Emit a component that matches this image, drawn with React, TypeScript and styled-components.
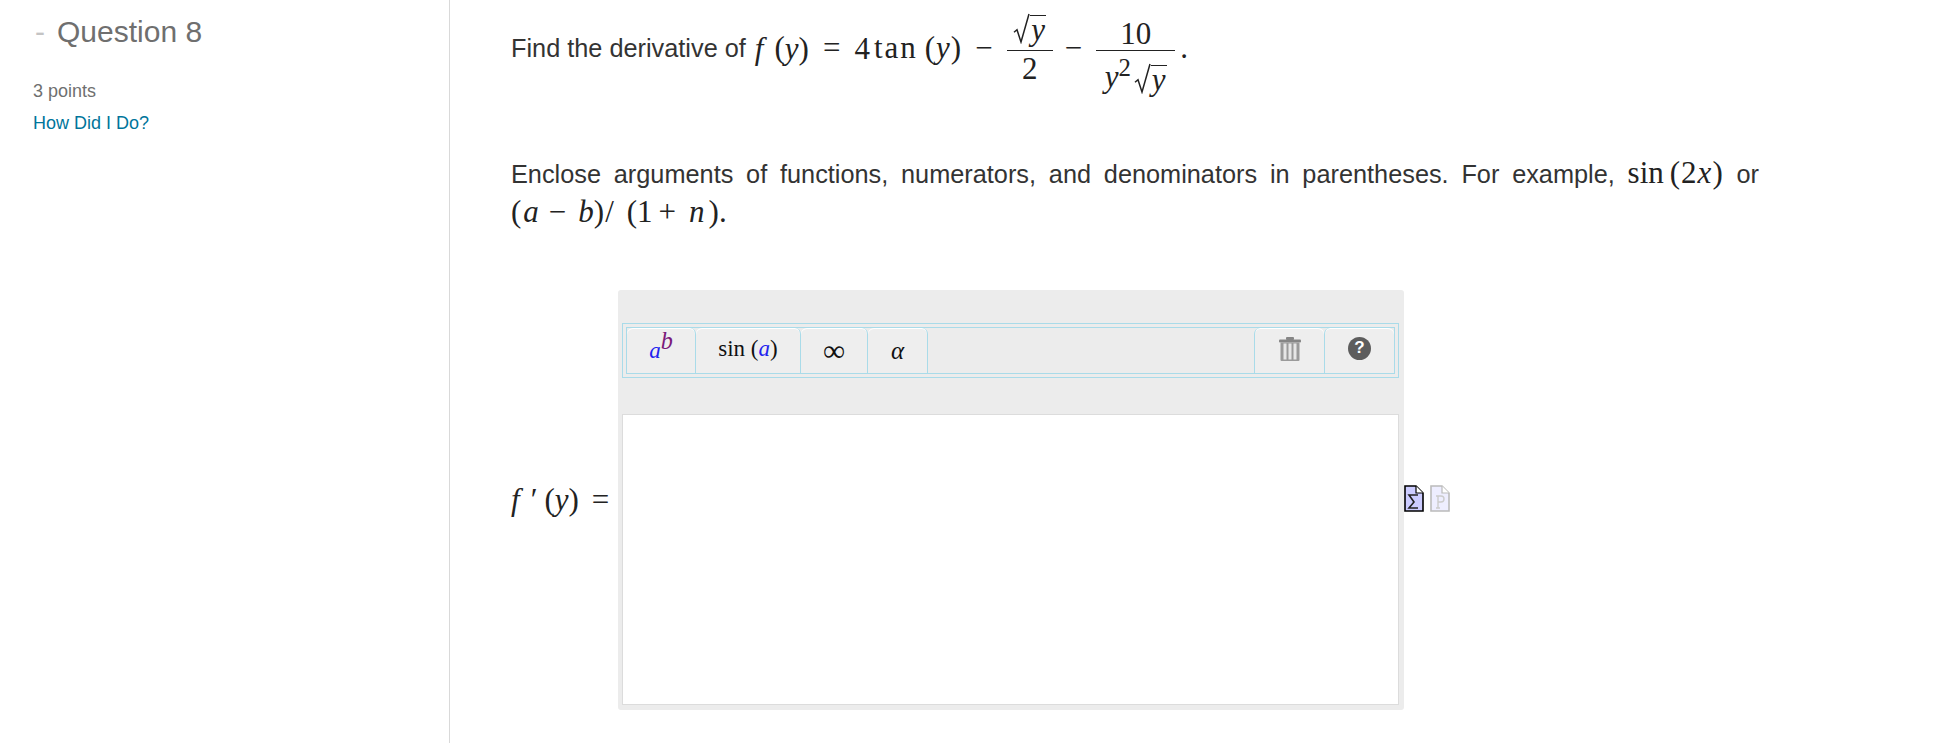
import React from "react";
import styled, { createGlobalStyle } from "styled-components";

const GlobalStyle = createGlobalStyle`
  html, body {
    margin: 0;
    padding: 0;
    background: #fff;
    font-family: "Liberation Sans", Arial, sans-serif;
  }
`;

const Page = styled.div`
  display: flex;
  height: 743px;
  overflow: hidden;
`;

const Sidebar = styled.aside`
  flex: none;
  box-sizing: border-box;
  width: 450px;
  padding: 14px 0 0 33px;
  border-right: 1px solid #d9d9d9;
  color: #6f6f6f;
`;

const QuestionTitle = styled.h2`
  display: flex;
  margin: 0;
  font-size: 30px;
  font-weight: 400;
  line-height: 36px;
`;

const Dash = styled.span`
  width: 22px;
  margin-left: 2px;
  color: #c4c4c4;
`;

const Points = styled.div`
  margin-top: 25px;
  font-size: 18px;
  line-height: 32px;
`;

const HelpLink = styled.a`
  display: block;
  color: #00759b;
  font-size: 18px;
  line-height: 32px;
  text-decoration: none;
`;

const Main = styled.main`
  width: 1248px;
  margin-left: 61px;
  color: #333;
  font-size: 25.3px;
`;

const Intro = styled.div`
  display: flex;
  align-items: center;
  height: 96px;
`;

const Instructions = styled.p`
  margin: 58px 0 0;
  line-height: 38px;
  text-align: justify;
`;

const Formula = styled.span`
  font-family: "Liberation Serif", "Times New Roman", serif;
  font-size: 31px;
  color: #222;
  white-space: nowrap;
`;

const IntroFormula = styled(Formula)`
  margin: 6px 0 0 2px;
`;

const V = styled.i<{ $color?: string }>`
  color: ${(p) => p.$color ?? "inherit"};
`;

// a symbol with the spacing TeX would put around it
const Sp = styled.span<{ $l?: number; $r?: number; $track?: number }>`
  margin-left: ${(p) => p.$l ?? 0}px;
  margin-right: ${(p) => p.$r ?? 0}px;
  letter-spacing: ${(p) => p.$track ?? 0}px;
`;

const Fraction = styled.span<{ $width: number }>`
  display: inline-flex;
  flex-direction: column;
  vertical-align: middle;
  width: ${(p) => p.$width}px;
`;

const Numerator = styled.span<{ $line: number }>`
  display: block;
  height: 40px;
  border-bottom: 1px solid #222;
  line-height: ${(p) => p.$line}px;
  text-align: center;
`;

const Denominator = styled.span<{ $line: number }>`
  display: block;
  height: 42px;
  line-height: ${(p) => p.$line}px;
  text-align: center;
`;

const Sqrt = styled.span<{ $drop: number }>`
  display: inline-flex;
  align-items: flex-end;
  vertical-align: ${(p) => p.$drop}px;
`;

const Radicand = styled.span`
  margin-top: 3px;
  padding: 0 1px;
  border-top: 1px solid #222;
  line-height: 28px;
`;

const Sup = styled.sup<{ $color?: string; $size: string; $lift: number }>`
  font-size: ${(p) => p.$size};
  line-height: 0;
  vertical-align: ${(p) => p.$lift}px;
  color: ${(p) => p.$color ?? "inherit"};
`;

const WidgetRow = styled.div`
  display: flex;
  align-items: center;
  margin-top: 58px;
`;

const AnswerLabel = styled.label`
  flex: none;
  width: 107px;
`;

const Panel = styled.div`
  flex: none;
  box-sizing: border-box;
  width: 786px;
  height: 420px;
  padding: 33px 5px 5px 4px;
  background: #ececec;
  border-radius: 3px;
`;

const Toolbar = styled.div`
  box-sizing: border-box;
  height: 55px;
  padding: 3px;
  border: 1px solid #a9dbe9;
`;

const ToolbarInner = styled.div`
  display: flex;
  justify-content: space-between;
  box-sizing: border-box;
  height: 100%;
  border: 1px solid #a9dbe9;
`;

const ToolGroup = styled.div`
  display: flex;
`;

const ToolButton = styled.button<{ $width: number; $side?: "left"; $size?: number }>`
  display: flex;
  align-items: center;
  justify-content: center;
  box-sizing: border-box;
  width: ${(p) => p.$width}px;
  padding: 0;
  background: #eeeeee;
  border: 0;
  border-${(p) => p.$side ?? "right"}: 1px solid #a9dbe9;
  border-radius: 6px 6px 0 0;
  box-shadow: inset 0 1px 0 #fff;
  font-family: "Liberation Serif", "Times New Roman", serif;
  font-size: ${(p) => p.$size ?? 23}px;
  color: #111;
`;

const Spacer = styled.div`
  flex: 1;
`;

const GlyphLift = styled.span`
  display: flex;
  margin-bottom: 4px;
`;

const HelpBadge = styled.span`
  display: flex;
  align-items: center;
  justify-content: center;
  width: 23px;
  height: 23px;
  margin-bottom: 5px;
  border-radius: 50%;
  background: #5d5d5d;
  color: #fff;
  font-family: "Liberation Sans", Arial, sans-serif;
  font-size: 17px;
  font-weight: 700;
`;

const Editor = styled.div`
  box-sizing: border-box;
  height: 291px;
  margin-top: 36px;
  background: #fff;
  border: 1px solid #dcdcdc;
`;

const DocIcons = styled.div`
  display: flex;
  gap: 6px;
  margin-bottom: 4px;
`;

const TrashIcon = () => (
  <svg width="22" height="24" viewBox="0 0 22 24">
    <rect x="0" y="2.5" width="22" height="3" rx="1" fill="#858585" />
    <rect x="7" y="0" width="8" height="3" rx="1" fill="#858585" />
    <rect x="1.5" y="5.5" width="19" height="18.5" rx="1" fill="#9a9a9a" />
    <rect x="4.5" y="6.5" width="3" height="16" fill="#e6e6e6" />
    <rect x="9.5" y="6.5" width="3" height="16" fill="#e6e6e6" />
    <rect x="14.5" y="6.5" width="3" height="16" fill="#e6e6e6" />
  </svg>
);

const DocIcon = ({ kind }: { kind: "sum" | "par" }) => {
  const sum = kind === "sum";
  const stroke = sum ? "#000" : "#bbb";
  const fill = sum ? "#ccccff" : "#eeeeff";
  return (
    <svg width="20" height="27" viewBox="0 0 20 27">
      <path d="M1 1H12L19 8V26H1Z" fill={fill} stroke={stroke} strokeWidth="1.6" />
      <path d="M12 1V8H19" fill="#fff" stroke={stroke} strokeWidth="1.2" />
      {sum ? (
        <path d="M14 10H5L10 17L5 23H14" fill="none" stroke="#222" strokeWidth="1.6" />
      ) : (
        <path d="M6 23H10M8 23V11M6 11H11C15 11 15 17 11 17H8" fill="none" stroke="#ccc" strokeWidth="1.4" />
      )}
    </svg>
  );
};

const Radical = ({ h }: { h: number }) => (
  <svg width="17" height={h} viewBox={`0 0 17 ${h}`}>
    <path d={`M1 ${h * 0.62}L4 ${h * 0.54}L8 ${h - 2}L16 1`} fill="none" stroke="#222" strokeWidth="1.5" />
  </svg>
);

const SqrtY = ({ drop }: { drop: number }) => (
  <Sqrt $drop={drop}>
    <Radical h={31} />
    <Radicand>
      <V>y</V>
    </Radicand>
  </Sqrt>
);

export default function App() {
  return (
    <Page>
      <GlobalStyle />
      <Sidebar>
        <QuestionTitle>
          <Dash>-</Dash>
          Question 8
        </QuestionTitle>
        <Points>3 points</Points>
        <HelpLink href="#">How Did I Do?</HelpLink>
      </Sidebar>
      <Main>
        <Intro>
          <span>Find the derivative of&nbsp;</span>
          <IntroFormula>
            <V>f</V>
            <Sp $l={11}>(</Sp>
            <V>y</V>)<Sp $l={14} $r={14}>=</Sp>4
            <Sp $l={4} $r={6} $track={2}>tan</Sp>
            <Sp $l={1} $track={1}>(<V>y</V>)</Sp>
            <Sp $l={13} $r={14}>−</Sp>
            <Fraction $width={46}>
              <Numerator $line={36}>
                <SqrtY drop={-6} />
              </Numerator>
              <Denominator $line={36}>2</Denominator>
            </Fraction>
            <Sp $l={12} $r={14}>−</Sp>
            <Fraction $width={79}>
              <Numerator $line={48}>10</Numerator>
              <Denominator $line={52}>
                <V>y</V>
                <Sup $size="0.8em" $lift={11}>2</Sup>
                <Sp $l={3} />
                <SqrtY drop={-7} />
              </Denominator>
            </Fraction>
            <Sp $l={5}>.</Sp>
          </IntroFormula>
        </Intro>
        <Instructions>
          Enclose arguments of functions, numerators, and denominators in parentheses. For example,{" "}
          <Formula>
            sin<Sp $l={6} $track={1}>(2<V>x</V>)</Sp>
          </Formula>{" "}
          or{" "}
          <Formula>
            (<Sp $l={2}><V>a</V></Sp>
            <Sp $l={10} $r={12}>−</Sp>
            <V>b</V>)<Sp $l={1}>/</Sp>
            <Sp $l={13}>(1</Sp>
            <Sp $l={6} $r={13}>+</Sp>
            <V>n</V>
            <Sp $l={4}>).</Sp>
          </Formula>
        </Instructions>
        <WidgetRow>
          <AnswerLabel>
            <Formula>
              <V>f</V>
              <Sp $l={11}>′</Sp>
              <Sp $l={7}>(</Sp>
              <V>y</V>)<Sp $l={13}>=</Sp>
            </Formula>
          </AnswerLabel>
          <Panel>
            <Toolbar>
              <ToolbarInner>
                <ToolGroup>
                  <ToolButton $width={69}>
                    <span>
                      <V $color="#2222ee">a</V>
                      <Sup $color="#7a1a7a" $size="1.05em" $lift={9}>
                        <V>b</V>
                      </Sup>
                    </span>
                  </ToolButton>
                  <ToolButton $width={105}>
                    <GlyphLift>
                      sin&nbsp;(<V $color="#2222ee">a</V>)
                    </GlyphLift>
                  </ToolButton>
                  <ToolButton $width={67} $size={31}>∞</ToolButton>
                  <ToolButton $width={60} $size={25}>
                    <V>α</V>
                  </ToolButton>
                </ToolGroup>
                <Spacer />
                <ToolGroup>
                  <ToolButton $width={70} $side="left">
                    <GlyphLift>
                      <TrashIcon />
                    </GlyphLift>
                  </ToolButton>
                  <ToolButton $width={70} $side="left">
                    <HelpBadge>?</HelpBadge>
                  </ToolButton>
                </ToolGroup>
              </ToolbarInner>
            </Toolbar>
            <Editor />
          </Panel>
          <DocIcons>
            <DocIcon kind="sum" />
            <DocIcon kind="par" />
          </DocIcons>
        </WidgetRow>
      </Main>
    </Page>
  );
}
